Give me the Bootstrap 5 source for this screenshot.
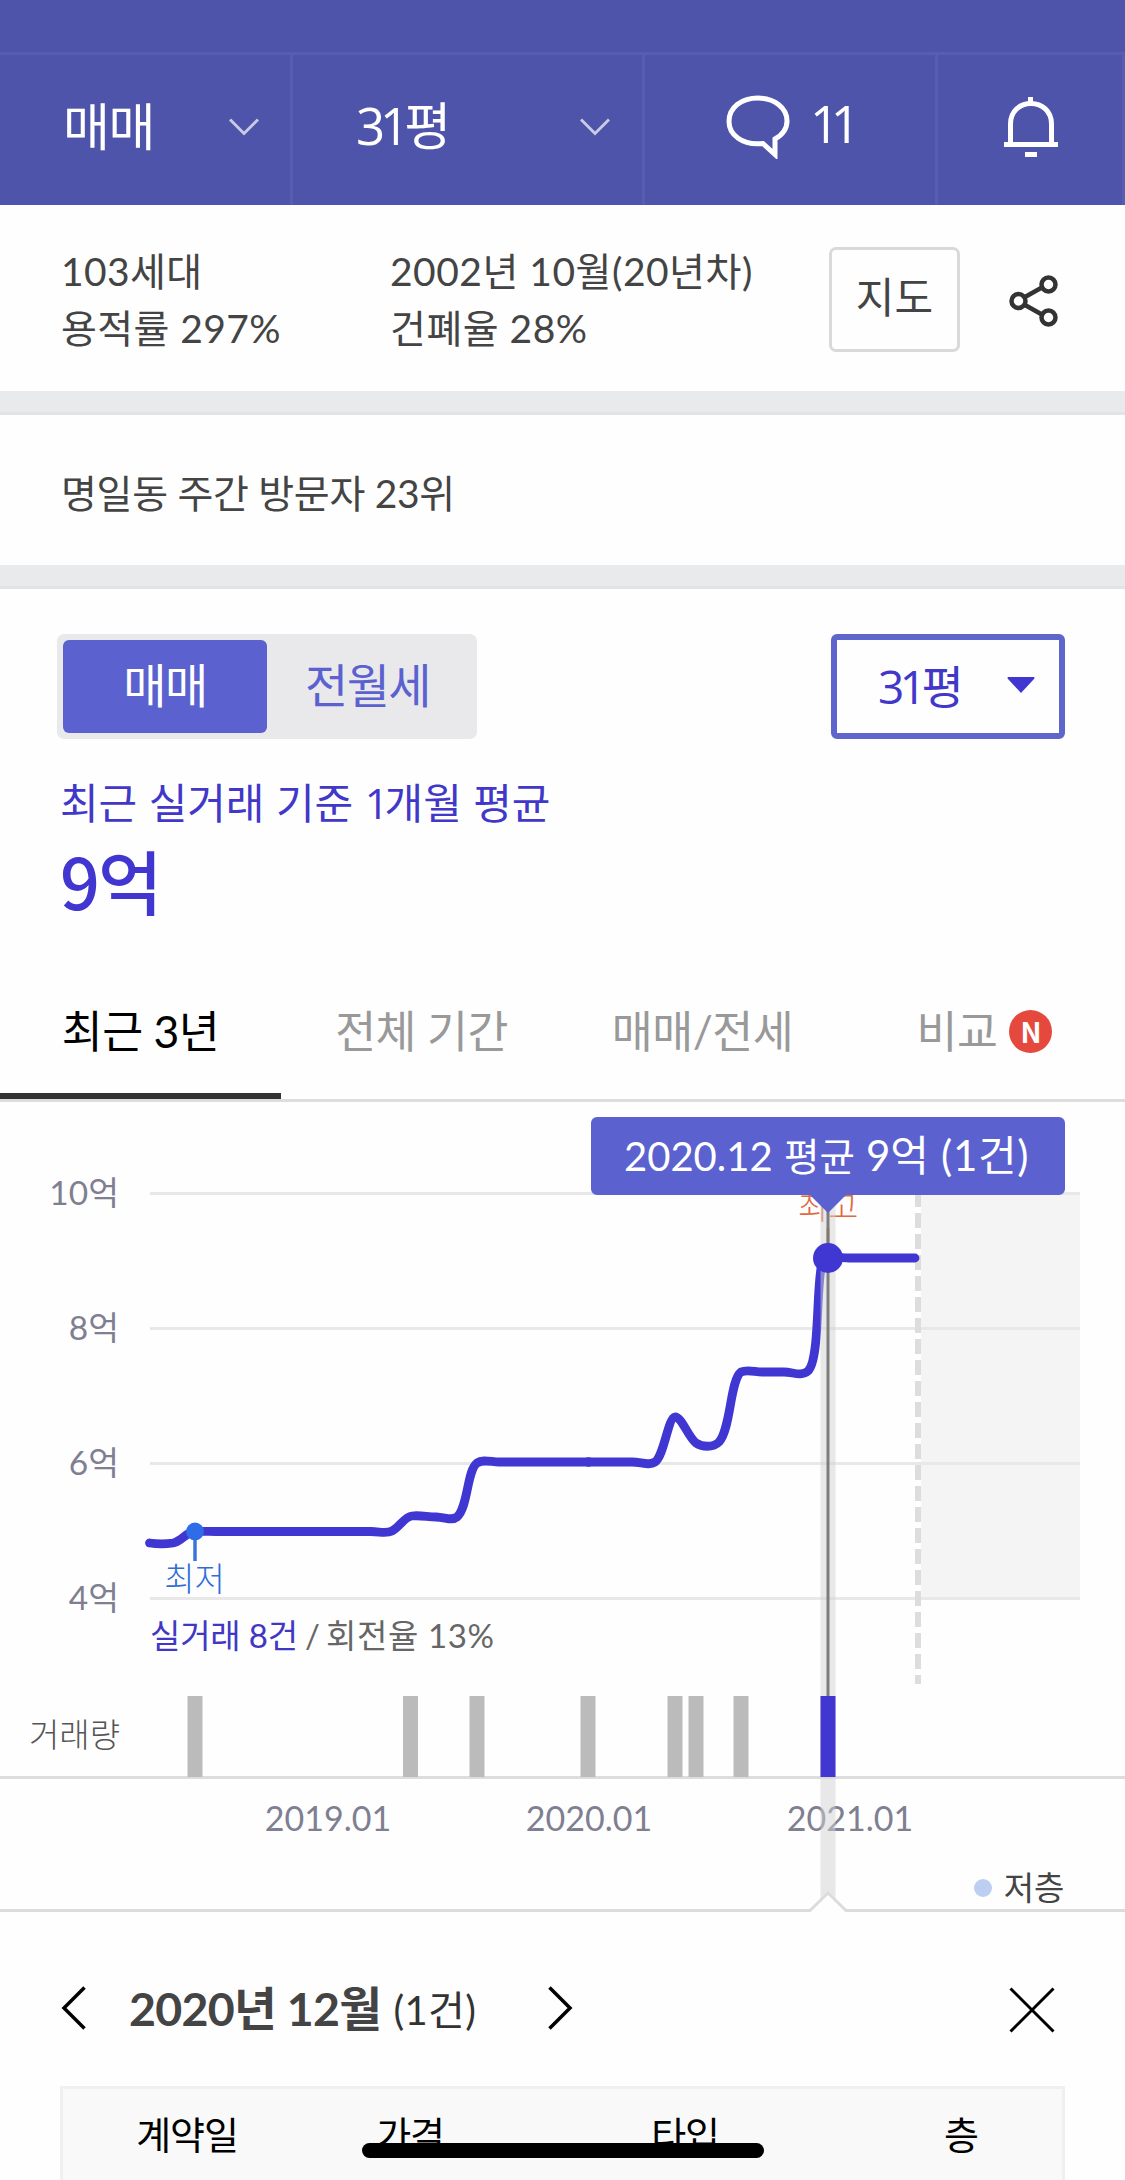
<!DOCTYPE html>
<html lang="ko">
<head>
<meta charset="utf-8">
<meta name="viewport" content="width=device-width, initial-scale=1">
<title>실거래가</title>
<link href="https://cdn.jsdelivr.net/npm/bootstrap@5.3.0/dist/css/bootstrap.min.css" rel="stylesheet">
<style>
  body { width: 1125px; height: 2180px; overflow: hidden; background: #fefefe; color: #444; font-family: Lato, "Noto Sans CJK KR", sans-serif; }
  .kr { font-family: "Noto Sans CJK KR", sans-serif; }
  .num { font-family: "Open Sans", "Noto Sans CJK KR", sans-serif; letter-spacing: -.1em; }
  .topbar { height: 205px; background: #4e54a9; }
  .top-strip { height: 55px; border-bottom: 3px solid #575db0; }
  .top-row { height: 150px; }
  .top-cell { border-right: 3px solid #575db0; font-size: 51px; line-height: 60px; letter-spacing: -1.4px; }
  .top-cell svg { flex: none; }
  .top-cell > span { margin-bottom: 6px; }
  .c1 { width: 293px; padding: 0 31px 6px 63px; }
  .c2 { width: 352px; padding: 0 32px 6px 63px; }
  .c3 { width: 293px; padding: 0 0 7px 81px; }
  .c3 > .num { letter-spacing: -8.500px; margin: 0 0 7px 18px; }
  .c4 { width: 187px; padding: 0 0 7px 66px; }
  .summary { height: 186px; padding: 38px 67px 0 61px; font-size: 39px; line-height: 57px; letter-spacing: .4px; }
  .summary .info-a { width: 329px; }
  .summary .info-b { width: 439px; letter-spacing: .5px; }
  .map-btn { width: 131px; height: 105px; margin-top: 4px; border: 3px solid #d9d9d9; border-radius: 7px; color: #444; font-size: 42px; line-height: 50px; padding: 0 0 9px; letter-spacing: 0; }
  .share { margin: 32px 0 0 49px; }
  .strip { height: 24px; background: #e9eaec; border-bottom: 3px solid #e2e3e5; }
  .rank { height: 150px; padding: 7px 61px 0; font-size: 39px; letter-spacing: -.3px; }
  .price-head { height: 385px; padding: 45px 60px 0 57px; color: #4137c8; }
  .seg { width: 420px; height: 105px; padding: 6px; border-radius: 7px; background: #e9e9eb; font-size: 47px; }
  .seg div { flex: 1; height: 93px; line-height: 85px; padding-right: 3px; text-align: center; color: #5b62cf; border-radius: 6px; letter-spacing: -1.6px; }
  .seg .on { flex: none; width: 204px; background: #5b62cf; color: #fff; padding: 0; }
  .size-pick { width: 234px; height: 105px; border: 6px solid #5f66cb; border-radius: 6px; padding: 0 24px 0 41px; font-size: 46px; letter-spacing: -1.2px; }
  .size-pick > span { margin-bottom: 2px; }
  .size-pick svg { margin-bottom: 3px; }
  .avg-label { font-size: 42px; line-height: 60px; height: 60px; margin: 32px 0 0 3px; letter-spacing: -.1px; }
  .avg-value { font-size: 70px; line-height: 80px; font-weight: 500; margin: 9px 0 0 3px; letter-spacing: -2px; color: #4137d0; }
  .range-tabs { height: 128px; border-bottom: 3px solid #ddd; font-size: 44.5px; color: #999; letter-spacing: -.5px; }
  .range-tabs > div { height: 125px; padding-bottom: 10px; }
  .t1 { width: 281px; color: #000; border-bottom: 6px solid #333; padding-bottom: 4px !important; }
  .t2 { width: 281px; } .t3 { width: 281px; } .t4 { width: 282px; padding-left: 1px; }
  .new-dot { width: 43px; height: 43px; margin: 0 0 0 12px; border-radius: 50%; background: #e5493d; color: #fff; font: 700 28px/42px "Noto Sans CJK KR", sans-serif; text-align: center; letter-spacing: 0; }
  .chart { display: block; width: 1125px; height: 810px; }
  .month-nav { height: 174px; padding: 18px 70px 0 61px; }
  .month-nav .title-a { font-size: 46.500px; font-weight: 700; letter-spacing: -.7px; margin: 2px 0 0 43px; }
  .month-nav .title-b { width: 84px; font-size: 40px; letter-spacing: .4px; color: #333; margin: 4px 71px 0 12px; white-space: nowrap; }
  .deals { margin: 0 60px; height: 94px; border: 3px solid #f0f0f0; border-bottom: 0; background: #f9f9f9; color: #000; font-size: 38px; letter-spacing: -1.2px; }
  .deals > div { text-align: center; line-height: 88px; }
  .d1 { width: 248px; } .d2 { width: 198px; } .d3 { width: 352px; } .d4 { width: 200px; }
  .home-bar { position: absolute; left: 362px; top: 2143px; width: 402px; height: 15px; border-radius: 8px; background: #000; }
</style>
<script src="https://cdn.jsdelivr.net/npm/bootstrap@5.3.0/dist/js/bootstrap.bundle.min.js"></script>
</head>
<body class="position-relative">
<header class="topbar text-white kr">
  <div class="top-strip"></div>
  <div class="top-row d-flex">
    <div class="top-cell c1 d-flex align-items-center justify-content-between"><span>매매</span>
      <svg width="30" height="18" viewBox="0 0 30 18" fill="none" stroke="#c8cae6" stroke-width="3"><path d="M1 1.500 15 15.500 29 1.500"/></svg></div>
    <div class="top-cell c2 d-flex align-items-center justify-content-between"><span><span class="num">31</span>평</span>
      <svg width="30" height="18" viewBox="0 0 30 18" fill="none" stroke="#c8cae6" stroke-width="3"><path d="M1 1.500 15 15.500 29 1.500"/></svg></div>
    <div class="top-cell c3 d-flex align-items-center">
      <svg width="66" height="64" viewBox="0 0 66 64" fill="none" stroke="#fff" stroke-width="5"><path d="M37 48.500C16 51 3 39.500 3 26.500 3 12 16 3 32 3s29 9.500 29 23c0 7-4 13.500-12 18v15.500Z"/></svg>
      <span class="num">11</span></div>
    <div class="top-cell c4 d-flex align-items-center">
      <svg width="54" height="60" viewBox="0 0 54 60" fill="none" stroke="#fff" stroke-width="5"><path d="M26.500 0v6M6.500 46V27C6.500 14 16 6.500 27 6.500S47.500 14 47.500 27v19M0 47.500h54M21 57.500h12"/></svg></div>
  </div>
</header>

<section class="summary d-flex">
  <div class="info-a">103세대<br>용적률 297%</div>
  <div class="info-b">2002년 10월(20년차)<br>건폐율 28%</div>
  <button class="btn map-btn kr text-center">지도</button>
  <svg class="share" width="49" height="52" viewBox="0 0 49 52" fill="none" stroke="#333" stroke-width="4.500"><path d="m16 22 16-9M16 30l16 9"/><circle cx="9.500" cy="26" r="7"/><circle cx="39.500" cy="9.500" r="7"/><circle cx="39.500" cy="42.500" r="7"/></svg>
</section>
<div class="strip"></div>
<section class="rank d-flex align-items-center">명일동 주간 방문자 23위</section>
<div class="strip"></div>

<section class="price-head kr">
  <div class="d-flex justify-content-between">
    <div class="seg d-flex"><div class="on">매매</div><div>전월세</div></div>
    <div class="size-pick d-flex align-items-center justify-content-between"><span><span class="num">31</span>평</span>
      <svg width="28" height="16" viewBox="0 0 28 16"><path d="M1 0h26q1 1 0 2L14 16 1 2Q0 1 1 0" fill="#4137d0"/></svg></div>
  </div>
  <div class="avg-label">최근 실거래 기준 <span class="num">1</span>개월 평균</div>
  <div class="avg-value">9억</div>
</section>

<nav class="range-tabs d-flex">
  <div class="t1 d-flex align-items-center justify-content-center">최근 3년</div>
  <div class="t2 d-flex align-items-center justify-content-center">전체 기간</div>
  <div class="t3 d-flex align-items-center justify-content-center">매매/전세</div>
  <div class="t4 d-flex align-items-center justify-content-center">비교<span class="new-dot">N</span></div>
</nav>

<svg class="chart" viewBox="0 1102 1125 810" font-family="Lato, 'Noto Sans CJK KR', sans-serif">
  <rect x="921" y="1193" width="159" height="407" fill="#f4f4f4"/>
  <path d="M150 1193.500h930M150 1328.500h930M150 1463.500h930M150 1598.500h930" stroke="#e8e8e8" stroke-width="3"/>
  <path d="M918 1192v492" stroke="#ddd" stroke-width="6" stroke-dasharray="15 6"/>
  <g font-size="33.500" fill="#7f7f92" text-anchor="end">
    <text x="119" y="1205">10억</text><text x="119" y="1340">8억</text><text x="119" y="1475">6억</text><text x="119" y="1610">4억</text>
  </g>
  <text x="828" y="1219" font-size="33" font-weight="300" fill="#e0673f" text-anchor="middle">최고</text>
  <path d="M828 1228v20" stroke="#e0673f" stroke-width="3"/>
  <path d="M149.500 1543C157 1544 166 1544 173 1543 182 1541 186 1532 195 1531.500 203 1531 208 1531.500 216 1531.500H371C380 1531.500 386 1534 392 1531 400 1527 404 1517 412 1516 420 1515 428 1517 436 1517 446 1517.500 452 1521 457 1517 468 1508 467 1470 477 1463 483 1459 491 1462 499 1462H632C641 1462 649 1466 655 1462 664 1456 668 1418 675 1417 682 1417 688 1437 696 1443 702 1447 713 1448 719 1442 731 1429 730 1380 741 1372 747 1369 755 1372 762 1372H784C793 1372 801 1377 808 1371 820 1360 816 1285 822 1263 826 1255 838 1258 849 1258H915" fill="none" stroke="#4036d2" stroke-width="8.800" stroke-linecap="round"/>
  <circle cx="588.500" cy="1462" r="4.800" fill="#4036d2"/>
  <path d="M195 1532v29" stroke="#3c74d8" stroke-width="3.500"/>
  <circle cx="195" cy="1531.500" r="9" fill="#2f6ce8"/>
  <text x="194.500" y="1591" font-size="33" font-weight="300" fill="#2f6cd8" text-anchor="middle">최저</text>
  <text x="150" y="1648" font-size="33" fill="#4137c4" letter-spacing="-.2">실거래 8건 <tspan x="305" fill="#666">/</tspan> <tspan x="326" fill="#666" letter-spacing=".6">회전율 13%</tspan></text>
  <text x="29" y="1747" font-size="33" font-weight="300" fill="#555">거래량</text>
  <path d="M0 1777.500h1125" stroke="#ddd" stroke-width="3"/>
  <path d="M195 1696v81M410.500 1696v81M477 1696v81M588 1696v81M675 1696v81M696 1696v81M741 1696v81" stroke="#bbb" stroke-width="15"/>
  <g font-size="34" fill="#7f7f92" text-anchor="middle">
    <text x="328" y="1831">2019.01</text><text x="589" y="1831">2020.01</text><text x="850" y="1831">2021.01</text>
  </g>
  <path d="M828 1194v715" stroke="#d2d2d2" stroke-opacity=".5" stroke-width="15"/>
  <path d="M828 1205v491" stroke="#777" stroke-opacity=".95" stroke-width="3"/>
  <path d="M828 1696v81" stroke="#4137d0" stroke-width="15"/>
  <circle cx="828" cy="1258" r="15" fill="#4036d2"/>
  <path d="M591 1123a6 6 0 0 1 6-6h462a6 6 0 0 1 6 6v66a6 6 0 0 1-6 6H846L828 1213 810 1195H597a6 6 0 0 1-6-6Z" fill="#5b62cf"/>
  <text x="624" y="1171" font-size="40" fill="#fff">2020.12 <tspan x="784" font-size="38.500">평균</tspan> <tspan x="866" font-size="42">9억</tspan> <tspan x="941" font-size="42" letter-spacing=".7">(1건)</tspan></text>
  <circle cx="983" cy="1888" r="9" fill="#bccff0"/>
  <text x="1034" y="1900" font-size="33" fill="#444" text-anchor="middle">저층</text>
  <path d="M809 1912 828 1893 847 1912Z" fill="#fefefe"/>
  <path d="M0 1910.500h810L828 1893l18 17.500h279" fill="none" stroke="#dcdcdc" stroke-width="3"/>
</svg>

<section class="month-nav d-flex align-items-center">
  <svg width="25" height="44" viewBox="0 0 25 44" fill="none" stroke="#000" stroke-width="3.500"><path d="M23.500 1.500 3 22l20.500 20.500"/></svg>
  <span class="title-a">2020년 12월</span><span class="title-b">(1건)</span>
  <svg width="25" height="44" viewBox="0 0 25 44" fill="none" stroke="#000" stroke-width="3.500"><path d="M1.500 1.500 22 22 1.500 42.500"/></svg>
  <svg class="ms-auto mt-1" width="46" height="46" viewBox="0 0 46 46" fill="none" stroke="#000" stroke-width="3"><path d="m1.500 1.500 43 43m0-43-43 43"/></svg>
</section>
<section class="deals d-flex kr">
  <div class="d1">계약일</div><div class="d2">가격</div><div class="d3">타입</div><div class="d4">층</div>
</section>
<div class="home-bar"></div>
</body>
</html>
